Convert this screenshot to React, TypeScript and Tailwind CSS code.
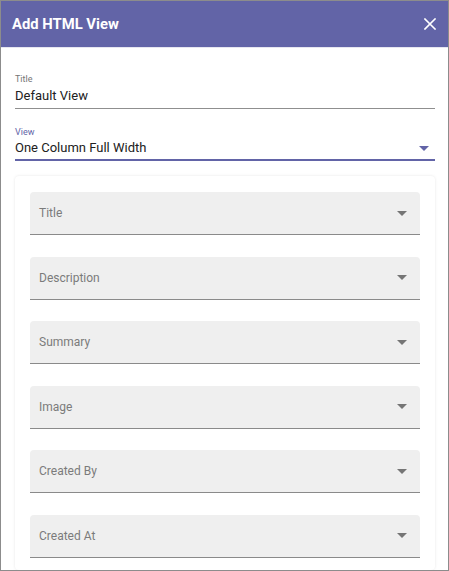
import React from "react";

const fields = ["Title", "Description", "Summary", "Image", "Created By", "Created At"];

function Arrow({ color }: { color: string }) {
  return (
    <svg width="10" height="5" viewBox="0 0 10 5" className="shrink-0">
      <path d="M0 0 L10 0 L5 5 Z" fill={color} />
    </svg>
  );
}

export default function App() {
  return (
    <div
      className="w-[449px] h-[571px] border border-[#8c8c8c] bg-white overflow-hidden flex flex-col"
      style={{ fontFamily: "Roboto, 'Liberation Sans', sans-serif" }}
    >
      <div className="h-[46px] shrink-0 bg-[#6264a7] flex items-center justify-between pl-[11px] pr-[12px]">
        <span className="text-white text-[14.8px] font-bold leading-none">Add HTML View</span>
        <svg width="12" height="12" viewBox="0 0 12 12">
          <path d="M1 1 L11 11 M11 1 L1 11" stroke="white" strokeWidth="1.6" strokeLinecap="square" />
        </svg>
      </div>
      <div className="h-px shrink-0 bg-[#e6e6f0]" />
      <div className="flex-1 pl-[14px] pr-[13px] pt-[26px] flex flex-col">
        <div className="border-b border-[#8f8f8f] pb-[4px]">
          <div className="text-[9px] leading-[11px] text-[#757575]">Title</div>
          <div className="mt-[3px] text-[13px] leading-[16px] text-[#212121]">Default View</div>
        </div>
        <div className="mt-[18px] border-b-2 border-[#6264a7] pb-[3px]">
          <div className="text-[9px] leading-[11px] text-[#6264a7]">View</div>
          <div className="mt-[2px] flex items-center justify-between pr-[6px]">
            <span className="text-[13px] leading-[16px] text-[#212121]">One Column Full Width</span>
            <Arrow color="#6264a7" />
          </div>
        </div>
        <div className="mt-[15px] flex-1 rounded-[4px] bg-white shadow-[0_0_3px_rgba(0,0,0,0.10)] px-[15px] pt-[16px] flex flex-col gap-[21.6px]">
          {fields.map((f) => (
            <div
              key={f}
              className="h-[43px] shrink-0 rounded-t-[4px] bg-[#efefef] border-b border-[#8a8a8a] flex items-center justify-between pl-[9px] pr-[13px]"
            >
              <span className="text-[12px] leading-none text-[#7b7b7b]">{f}</span>
              <Arrow color="#757575" />
            </div>
          ))}
        </div>
      </div>
    </div>
  );
}
